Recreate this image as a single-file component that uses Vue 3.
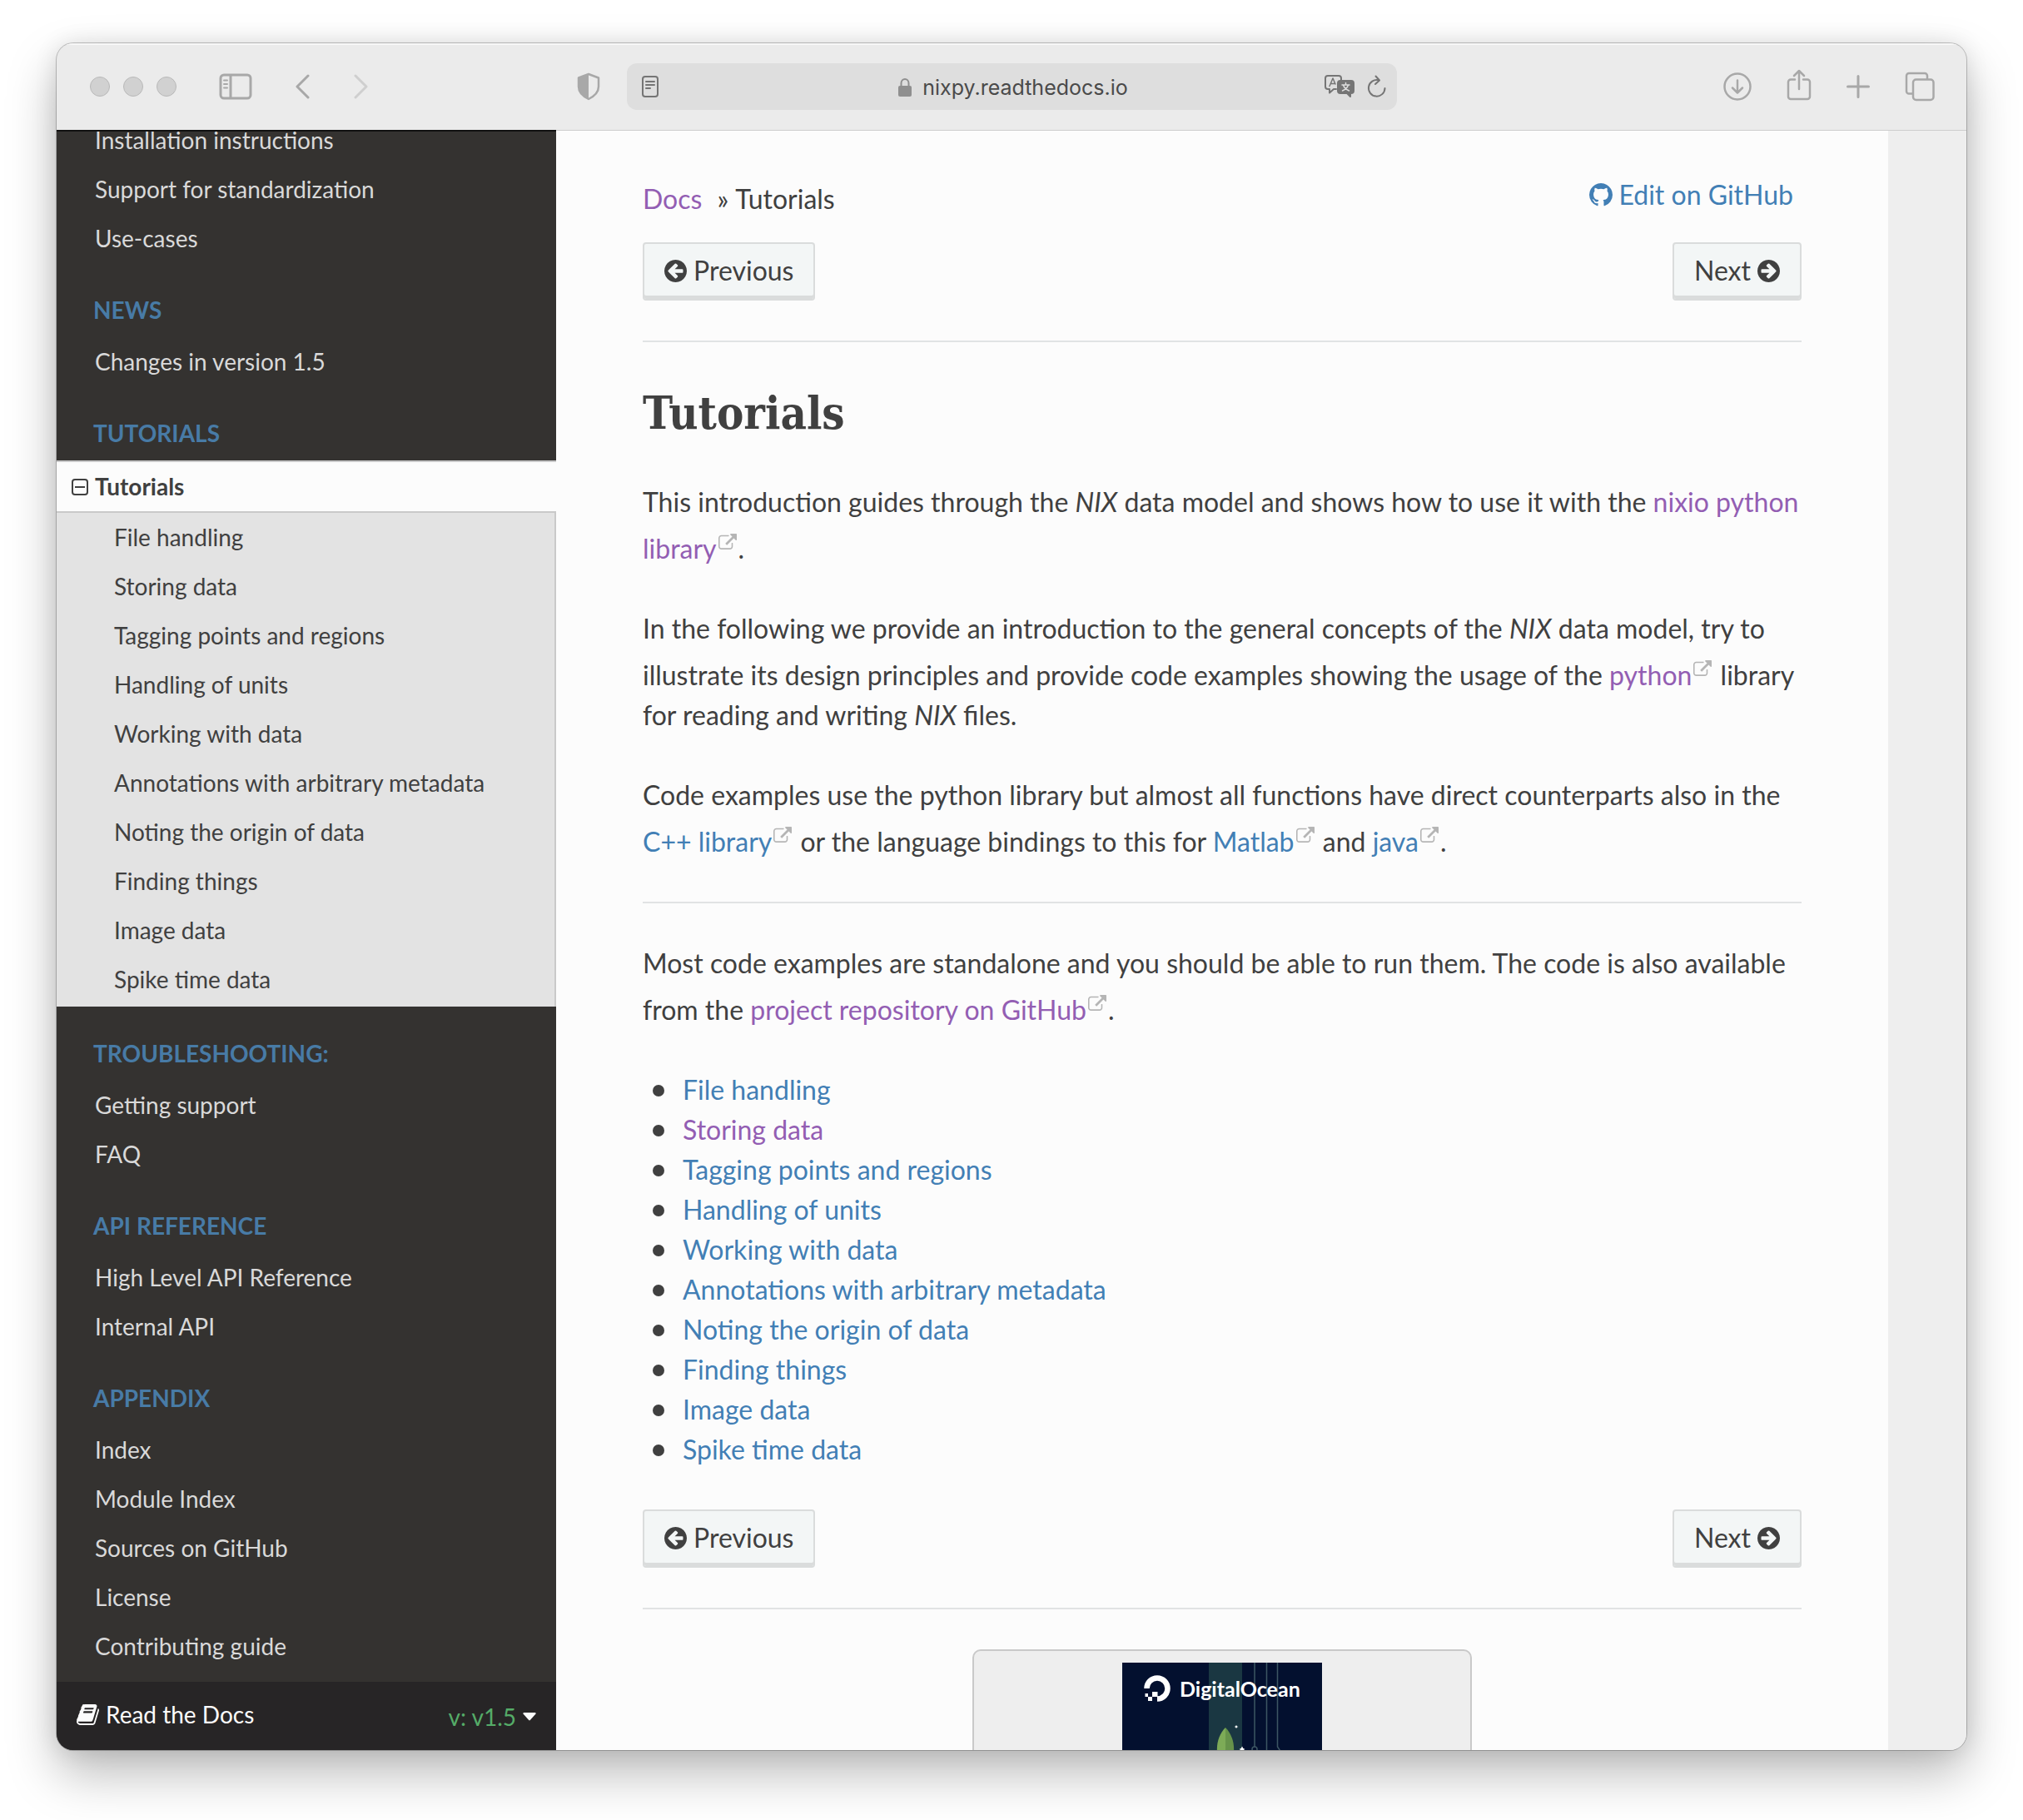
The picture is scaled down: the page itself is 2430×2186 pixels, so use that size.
<script setup>
const introItems = ['Installation instructions', 'Support for standardization', 'Use-cases']

const topics = [
  'File handling',
  'Storing data',
  'Tagging points and regions',
  'Handling of units',
  'Working with data',
  'Annotations with arbitrary metadata',
  'Noting the origin of data',
  'Finding things',
  'Image data',
  'Spike time data',
]

const visited = new Set(['Storing data'])

const lowerGroups = [
  { title: 'Troubleshooting:', items: ['Getting support', 'FAQ'] },
  { title: 'API Reference', items: ['High Level API Reference', 'Internal API'] },
  {
    title: 'Appendix',
    items: ['Index', 'Module Index', 'Sources on GitHub', 'License', 'Contributing guide'],
  },
]
</script>

<template>
  <svg class="sprite" aria-hidden="true">
    <symbol id="i-arrow" viewBox="128 128 1536 1536">
      <path d="M1408 960v-128q0-26-19-45t-45-19h-502l189-189q19-19 19-45t-19-45l-91-91q-18-18-45-18t-45 18l-362 362-91 91q-18 18-18 45t18 45l91 91 362 362q18 18 45 18t45-18l91-91q18-18 18-45t-18-45l-189-189h502q26 0 45-19t19-45zm256-64q0 209-103 385.5t-279.5 279.5-385.5 103-385.5-103-279.5-279.5-103-385.5 103-385.5 279.5-279.5 385.5-103 385.5 103 279.5 279.5 103 385.5z" />
    </symbol>
    <symbol id="i-external" viewBox="0 0 1792 1536">
      <path d="M1408 928v320q0 119-84.5 203.5t-203.5 84.5h-832q-119 0-203.5-84.5t-84.5-203.5v-832q0-119 84.5-203.5t203.5-84.5h704q14 0 23 9t9 23v64q0 14-9 23t-23 9h-704q-66 0-113 47t-47 113v832q0 66 47 113t113 47h832q66 0 113-47t47-113v-320q0-14 9-23t23-9h64q14 0 23 9t9 23zm384-864v512q0 26-19 45t-45 19-45-19l-176-176-652 652q-10 10-23 10t-23-10l-114-114q-10-10-10-23t10-23l652-652-176-176q-19-19-19-45t19-45 45-19h512q26 0 45 19t19 45z" />
    </symbol>
  </svg>

  <div class="desktop">
    <div class="window">
      <header class="toolbar">
        <div class="tools tools-left">
          <div class="lights">
            <button aria-label="Close"></button>
            <button aria-label="Minimise"></button>
            <button aria-label="Zoom"></button>
          </div>
          <button class="icon sidebar-toggle" aria-label="Sidebar">
            <svg width="40" height="32" viewBox="0 0 40 32" fill="none" stroke="currentColor" stroke-width="3">
              <rect x="2" y="2" width="36" height="28" rx="4" />
              <path d="M14 2v28" />
              <path d="M6 8.500h4M6 13h4M6 17.500h4" stroke-width="2" stroke-linecap="round" />
            </svg>
          </button>
          <button class="icon back" aria-label="Back">
            <svg width="18" height="30" viewBox="0 0 18 30" fill="none" stroke="currentColor" stroke-width="3" stroke-linecap="round" stroke-linejoin="round">
              <path d="M16 2L3 15l13 13" />
            </svg>
          </button>
          <button class="icon forward" aria-label="Forward">
            <svg width="18" height="30" viewBox="0 0 18 30" fill="none" stroke="currentColor" stroke-width="3" stroke-linecap="round" stroke-linejoin="round">
              <path d="M2 2l13 13L2 28" />
            </svg>
          </button>
          <button class="icon shield" aria-label="Privacy report">
            <svg width="28" height="34" viewBox="0 0 28 34">
              <path d="M14 2L26 6.500V17c0 7-5 11.500-12 15C7 28.500 2 24 2 17V6.500z" fill="none" stroke="currentColor" stroke-width="2.500" stroke-linejoin="round" />
              <path d="M14 2L2 6.500V17c0 7 5 11.500 12 15z" fill="currentColor" />
            </svg>
          </button>
        </div>

        <div class="address">
          <svg class="reader" width="22" height="26" viewBox="0 0 22 26" fill="none" stroke="currentColor" stroke-width="2" stroke-linecap="round">
            <rect x="2" y="1" width="18" height="24" rx="3" />
            <path d="M6 7h10M6 11h10M6 15h5" />
          </svg>
          <div class="host">
            <svg width="18" height="24" viewBox="0 0 18 24">
              <path d="M4.500 11V7a4.500 5 0 0 1 9 0v4" fill="none" stroke="currentColor" stroke-width="2" />
              <rect x="1" y="10" width="16" height="13" rx="2" fill="currentColor" />
            </svg>
            <span>nixpy.readthedocs.io</span>
          </div>
          <svg class="translate" width="38" height="28" viewBox="0 0 38 28" fill="none" stroke="currentColor" stroke-width="2" stroke-linejoin="round" stroke-linecap="round">
            <path d="M15 17h-3l-5 4.500V17H5a3 3 0 0 1-3-3V4a3 3 0 0 1 3-3h13a3 3 0 0 1 3 3v2" />
            <path d="M7 13.500L11 4l3 7M8.500 10.500h4.500" stroke-width="1.500" />
            <path d="M20 7h13a3 3 0 0 1 3 3v9a3 3 0 0 1-3 3h-1v4l-4-4h-8a3 3 0 0 1-3-3v-9a3 3 0 0 1 3-3z" fill="currentColor" />
            <path d="M22 12h9M26.500 9.500V12M29.500 12c-1 3.500-3.500 5.500-7 7M23.500 12c1 3.500 3.500 5.500 7 7" stroke="#dedede" stroke-width="1.500" />
          </svg>
          <button class="icon reload" aria-label="Reload">
            <svg width="24" height="28" viewBox="0 0 24 28" fill="none" stroke="currentColor" stroke-width="2" stroke-linecap="round" stroke-linejoin="round">
              <path d="M14 6.300A9.800 9.800 0 1 0 21.500 16" />
              <path d="M10.500 1.500l4.500 5-5 4.500" />
            </svg>
          </button>
        </div>

        <div class="tools tools-right">
          <button class="icon" aria-label="Downloads">
            <svg width="34" height="34" viewBox="0 0 34 34" fill="none" stroke="currentColor" stroke-width="2.500" stroke-linecap="round" stroke-linejoin="round">
              <circle cx="17" cy="17" r="15.500" />
              <path d="M17 9.500v14.500M11 18.500l6 6 6-6" />
            </svg>
          </button>
          <button class="icon share" aria-label="Share">
            <svg width="30" height="38" viewBox="0 0 30 38" fill="none" stroke="currentColor" stroke-width="2.500" stroke-linecap="round" stroke-linejoin="round">
              <path d="M10 12.500H5a3 3 0 0 0-3 3V33a3 3 0 0 0 3 3h20a3 3 0 0 0 3-3V15.500a3 3 0 0 0-3-3h-5" />
              <path d="M15 24V2.500M9 8l6-6 6 6" />
            </svg>
          </button>
          <button class="icon" aria-label="New tab">
            <svg width="28" height="28" viewBox="0 0 28 28" fill="none" stroke="currentColor" stroke-width="3" stroke-linecap="round">
              <path d="M14 1.500v25M1.500 14h25" />
            </svg>
          </button>
          <button class="icon" aria-label="Tab overview">
            <svg width="36" height="36" viewBox="0 0 36 36" fill="none" stroke="currentColor" stroke-width="2.500" stroke-linejoin="round">
              <path d="M10 26.500H5a3 3 0 0 1-3-3V5a3 3 0 0 1 3-3h19a3 3 0 0 1 3 3v4" />
              <rect x="10" y="9.500" width="24.500" height="24.500" rx="3.500" />
            </svg>
          </button>
        </div>
      </header>

      <div class="page">
        <nav class="sidebar" aria-label="Documentation">
          <div class="menu">
            <ul>
              <li v-for="item in introItems" :key="item"><a href="#">{{ item }}</a></li>
            </ul>
            <p class="caption">News</p>
            <ul>
              <li><a href="#">Changes in version 1.5</a></li>
            </ul>
            <p class="caption">Tutorials</p>
            <ul>
              <li>
                <a href="#" class="current">
                  <svg width="22" height="22" viewBox="0 0 22 22" fill="none" stroke="currentColor" stroke-width="2">
                    <rect x="2" y="2" width="18" height="18" rx="3" />
                    <path d="M5 11h12" />
                  </svg>
                  <span>Tutorials</span>
                </a>
                <ul class="submenu">
                  <li v-for="topic in topics" :key="topic"><a href="#">{{ topic }}</a></li>
                </ul>
              </li>
            </ul>
            <template v-for="group in lowerGroups" :key="group.title">
              <p class="caption">{{ group.title }}</p>
              <ul>
                <li v-for="item in group.items" :key="item"><a href="#">{{ item }}</a></li>
              </ul>
            </template>
          </div>
          <button class="versions">
            <span class="brand">
              <svg width="27" height="25" viewBox="64 128 1664 1536" fill="currentColor">
                <path d="M1703 478q40 57 18 129l-275 906q-19 64-76.5 107.5t-122.5 43.5h-923q-77 0-148.5-53.5t-99.5-131.5q-24-67-2-127 0-4 3-27t4-37q1-8-3-21.5t-3-19.5q2-11 8-21t16.5-23.5 16.5-23.5q23-38 45-91.5t30-91.5q3-10 .5-30t-.5-28q3-11 17-28t17-23q21-36 42-92t25-90q1-9-2.5-32t.5-28q4-13 22-30.5t22-22.5q19-26 42.5-84.5t27.5-96.5q1-8-3-25.5t-2-26.5q2-8 9-18t18-23 17-21q8-12 16.5-30.5t15-35 16-36 19.5-32 26.5-23.5 36-11.5 47.5 5.5l-1 3q38-9 51-9h761q74 0 114 56t18 130l-274 906q-36 119-71.5 153.5t-128.5 34.5h-869q-27 0-38 15-11 16-1 43 24 70 144 70h923q29 0 56-15.5t35-41.5l300-987q7-22 5-57 38 15 59 43zm-1064 2q-4 13 2 22.5t20 9.5h608q13 0 25.5-9.5t16.5-22.5l21-64q4-13-2-22.5t-20-9.5h-608q-13 0-25.5 9.5t-16.5 22.5zm-83 256q-4 13 2 22.5t20 9.5h608q13 0 25.5-9.5t16.5-22.5l21-64q4-13-2-22.5t-20-9.5h-608q-13 0-25.5 9.5t-16.5 22.5z" />
              </svg>
              Read the Docs
            </span>
            <span class="version">
              v: v1.5
              <svg width="16" height="10" viewBox="0 0 16 10"><path d="M1 0h14q1 .5.500 1.500L8.800 9q-.8.800-1.600 0L.5 1.500Q0 .5 1 0z" fill="#fcfcfc" /></svg>
            </span>
          </button>
        </nav>

        <div class="content-wrap">
          <main class="content">
            <div class="crumb-row">
              <ol class="crumbs">
                <li><a href="#" class="visited">Docs</a><span class="sep">»</span></li>
                <li>Tutorials</li>
              </ol>
              <a href="#" class="edit">
                <svg width="28" height="28" viewBox="128 128 1536 1536" fill="currentColor">
                  <path d="M896 128q209 0 385.5 103t279.5 279.5 103 385.5q0 251-146.5 451.5t-378.5 277.5q-27 5-40-7t-13-30q0-3 .5-76.5t.5-134.5q0-97-52-142 57-6 102.5-18t94-39 81-66.5 53-105 20.5-150.5q0-119-79-206 37-91-8-204-28-9-81 11t-92 44l-38 24q-93-26-192-26t-192 26q-16-11-42.5-27t-83.5-38.5-85-13.5q-45 113-8 204-79 87-79 206 0 85 20.5 150t52.5 105 80.5 67 94 39 102.5 18q-39 36-49 103-21 10-45 15t-57 5-65.5-21.5-55.5-62.5q-19-32-48.5-52t-49.5-24l-20-3q-21 0-29 4.500t-5 11.500 9 14 13 12l7 5q22 10 43.500 38t31.500 51l10 23q13 38 44 61.500t67 30 69.500 7 55.500-3.500l23-4q0 38 .5 88.500t.5 54.500q0 18-13 30t-40 7q-232-77-378.500-277.500t-146.500-451.500q0-209 103-385.500t279.500-279.500 385.500-103z" />
                </svg>
                Edit on GitHub
              </a>
            </div>

            <div class="pager">
              <button><svg width="27" height="27"><use href="#i-arrow" /></svg>Previous</button>
              <button>Next<svg class="flip" width="27" height="27"><use href="#i-arrow" /></svg></button>
            </div>
            <hr />

            <h1>Tutorials</h1>
            <p>
              This introduction guides through the <em>NIX</em> data model and shows how to use it with the
              <a href="#" class="visited">nixio python library<svg class="ext"><use href="#i-external" /></svg></a>.
            </p>
            <p>
              In the following we provide an introduction to the general concepts of the <em>NIX</em> data model, try to
              illustrate its design principles and provide code examples showing the usage of the
              <a href="#" class="visited">python<svg class="ext"><use href="#i-external" /></svg></a> library for reading
              and writing <em>NIX</em> files.
            </p>
            <p>
              Code examples use the python library but almost all functions have direct counterparts also in the
              <a href="#">C++ library<svg class="ext"><use href="#i-external" /></svg></a> or the language bindings to
              this for <a href="#">Matlab<svg class="ext"><use href="#i-external" /></svg></a> and
              <a href="#">java<svg class="ext"><use href="#i-external" /></svg></a>.
            </p>
            <hr />
            <p>
              Most code examples are standalone and you should be able to run them. The code is also available from the
              <a href="#" class="visited">project repository on GitHub<svg class="ext"><use href="#i-external" /></svg></a>.
            </p>
            <ul class="toc">
              <li v-for="topic in topics" :key="topic">
                <a href="#" :class="{ visited: visited.has(topic) }">{{ topic }}</a>
              </li>
            </ul>

            <div class="pager">
              <button><svg width="27" height="27"><use href="#i-arrow" /></svg>Previous</button>
              <button>Next<svg class="flip" width="27" height="27"><use href="#i-arrow" /></svg></button>
            </div>
            <hr />

            <aside class="promo">
              <svg width="240" height="180" viewBox="0 0 240 180">
                <rect width="240" height="180" fill="#03102f" />
                <rect x="104" width="40" height="180" fill="#1a3742" />
                <path d="M159 0v101M173.500 0v180M186.500 0v101l8 12" fill="none" stroke="#3d5663" stroke-width="1.500" />
                <circle cx="159" cy="104" r="3" fill="none" stroke="#3d5663" stroke-width="1.500" />
                <path d="M124 78c-13 13-14 36 0 54z" fill="#7dab57" />
                <path d="M124 78c13 13 14 36 0 54z" fill="#66934a" />
                <path d="M137 75l1 1.500 1.500.5-1.500.5-1 1.500-1-1.500-1.500-.5 1.500-.5zM144 100.500l1.200 2.300 2.300 1.200-2.300 1.200-1.200 2.300-1.200-2.300-2.300-1.200 2.300-1.200z" fill="#fff" />
                <path d="M29.500 31A12.500 12.500 0 1 1 42 43.500" fill="none" stroke="#fff" stroke-width="6.500" />
                <path d="M36 35h6.500v6H36zM31 41h5v5h-5zM27.500 37h3.500v4h-3.500z" fill="#fff" />
                <text x="69" y="41" fill="#fff">DigitalOcean</text>
              </svg>
            </aside>
          </main>
        </div>
      </div>
    </div>
  </div>
</template>

<style>
body {
  margin: 0;
  background: #fff;
}
</style>

<style scoped>
.sprite {
  position: absolute;
  width: 0;
  height: 0;
}
.desktop {
  box-sizing: border-box;
  height: 100vh;
  padding: 52px 68px 84px;
  font-family: Lato, "Liberation Sans", sans-serif;
  font-size: 32px;
  line-height: 48px;
  color: #404040;
}
.window {
  display: flex;
  flex-direction: column;
  height: 100%;
  overflow: hidden;
  border-radius: 20px;
  background: #ebebeb;
  box-shadow: 0 0 0 1px rgba(0, 0, 0, 0.22), 0 28px 60px rgba(0, 0, 0, 0.27), 0 0 28px rgba(0, 0, 0, 0.1);
}
button {
  margin: 0;
  padding: 0;
  border: 0;
  background: none;
  font: inherit;
  color: inherit;
}
ul,
ol {
  margin: 0;
  padding: 0;
  list-style: none;
}
a {
  color: #427fb5;
  text-decoration: none;
}
a.visited {
  color: #935eb3;
}

/* Browser toolbar */
.toolbar {
  display: grid;
  grid-template-columns: minmax(0, 1fr) 925px minmax(0, 1fr);
  align-items: center;
  height: 104px;
  flex: none;
  color: #a8a8a8;
  box-shadow: inset 0 2px #f7f7f7;
}
.tools {
  display: flex;
  align-items: center;
}
.icon {
  display: flex;
}
.tools-left {
  padding: 0 32px 0 40px;
}
.lights {
  display: flex;
  gap: 16px;
}
.lights button {
  width: 24px;
  height: 24px;
  border: 1px solid #b9b9b9;
  border-radius: 50%;
  background: #d1d1d1;
}
.sidebar-toggle {
  margin-left: 51px;
}
.back {
  margin-left: 51px;
}
.forward {
  margin-left: 53px;
  color: #cfcfcf;
}
.shield {
  margin-left: auto;
}
.tools-right {
  justify-content: flex-end;
  gap: 42px;
  padding-right: 38px;
}
.share {
  padding-bottom: 4px;
}
.address {
  display: flex;
  align-items: center;
  height: 56px;
  padding: 0 12px 0 17px;
  border-radius: 12px;
  background: #dedede;
  color: #757575;
}
.host {
  display: flex;
  flex: 1;
  align-items: center;
  justify-content: center;
  gap: 12px;
  padding: 2px 0 0 52px;
  font-family: Inter, "Liberation Sans", sans-serif;
  font-size: 25px;
  color: #4a4a4a;
}
.host svg {
  color: #8f8f8f;
}
.reload {
  margin-left: 14px;
}

/* Sidebar */
.page {
  display: flex;
  flex: 1;
  min-height: 0;
}
.sidebar {
  display: flex;
  flex: none;
  flex-direction: column;
  width: 600px;
  overflow: hidden;
  background: #343230;
  font-size: 28px;
  box-shadow: inset 0 2px #111;
}
.menu {
  flex: 1;
  min-height: 0;
  margin-top: -17px;
}
.menu a {
  display: block;
  padding-left: 46px;
  line-height: 59px;
  color: #d9d9d9;
}
.caption {
  margin: 24px 0 0;
  padding-left: 44px;
  line-height: 65px;
  font-weight: 700;
  text-transform: uppercase;
  color: #487ba6;
}
.menu .current {
  display: flex;
  align-items: center;
  gap: 7px;
  padding-left: 17px;
  border: solid #c9c9c9;
  border-width: 2px 0;
  background: #fcfcfc;
  font-weight: 700;
  color: #404040;
}
.submenu {
  padding-bottom: 3px;
  border-right: 2px solid #c9c9c9;
  background: #e3e3e3;
}
.submenu a {
  padding-left: 69px;
  color: #404040;
}
.versions {
  display: flex;
  flex: none;
  align-items: center;
  justify-content: space-between;
  height: 82px;
  padding: 0 24px 4px;
  background: #272526;
  color: #fcfcfc;
}
.brand,
.version {
  display: flex;
  align-items: center;
  gap: 8px;
}
.version {
  padding-top: 6px;
  color: #55ac68;
}

/* Document */
.content-wrap {
  flex: 1;
  min-width: 0;
  overflow: hidden;
  background: #eee;
  box-shadow: inset 0 1px #cdcdcd;
}
.content {
  box-sizing: border-box;
  max-width: 1600px;
  min-height: 100%;
  padding: 54px 104px;
  border-top: 1px solid #cdcdcd;
  background: #fcfcfc;
}
.crumb-row {
  display: flex;
  justify-content: space-between;
  margin-bottom: 28px;
}
.crumbs {
  display: flex;
  gap: 8px;
  padding-top: 4px;
}
.sep {
  padding-left: 18px;
}
.edit {
  display: flex;
  align-items: center;
  gap: 7px;
  height: 46px;
  padding-right: 10px;
}
.pager {
  display: flex;
  justify-content: space-between;
}
.pager button {
  display: flex;
  align-items: center;
  gap: 8px;
  height: 70px;
  padding: 0 24px 2px;
  border: 2px solid #dadcdc;
  border-radius: 4px;
  background: #f3f6f6;
  box-shadow: inset 0 -4px #dadcdc;
}
.pager svg {
  fill: currentColor;
}
.flip {
  transform: rotate(180deg);
}
hr {
  height: 2px;
  margin: 48px 0;
  border: 0;
  background: #e1e3e4;
}
h1 {
  margin: 0 0 48px;
  padding-top: 2px;
  font-family: "Roboto Slab", "DejaVu Serif Condensed", "DejaVu Serif", serif;
  font-size: 54px;
  line-height: 70px;
  font-weight: 700;
}
p {
  margin: 0 0 48px;
}
.ext {
  width: 22px;
  height: 19px;
  margin: 14px 2px 0 2px;
  vertical-align: 11px;
  fill: #b5b5b5;
}
.toc {
  margin-bottom: 48px;
  padding-left: 12px;
}
.toc li {
  display: flex;
  align-items: center;
  gap: 22px;
}
.toc li::before {
  content: "";
  width: 14px;
  height: 14px;
  margin-top: 2px;
  border-radius: 50%;
  background: #404040;
}
.promo {
  display: flex;
  justify-content: center;
  box-sizing: border-box;
  max-width: 600px;
  margin: 0 auto;
  padding: 14px;
  border: 2px solid #c9c9c9;
  border-radius: 10px;
  background: #eee;
}
.promo text {
  font-size: 25px;
  font-weight: 700;
}
</style>
